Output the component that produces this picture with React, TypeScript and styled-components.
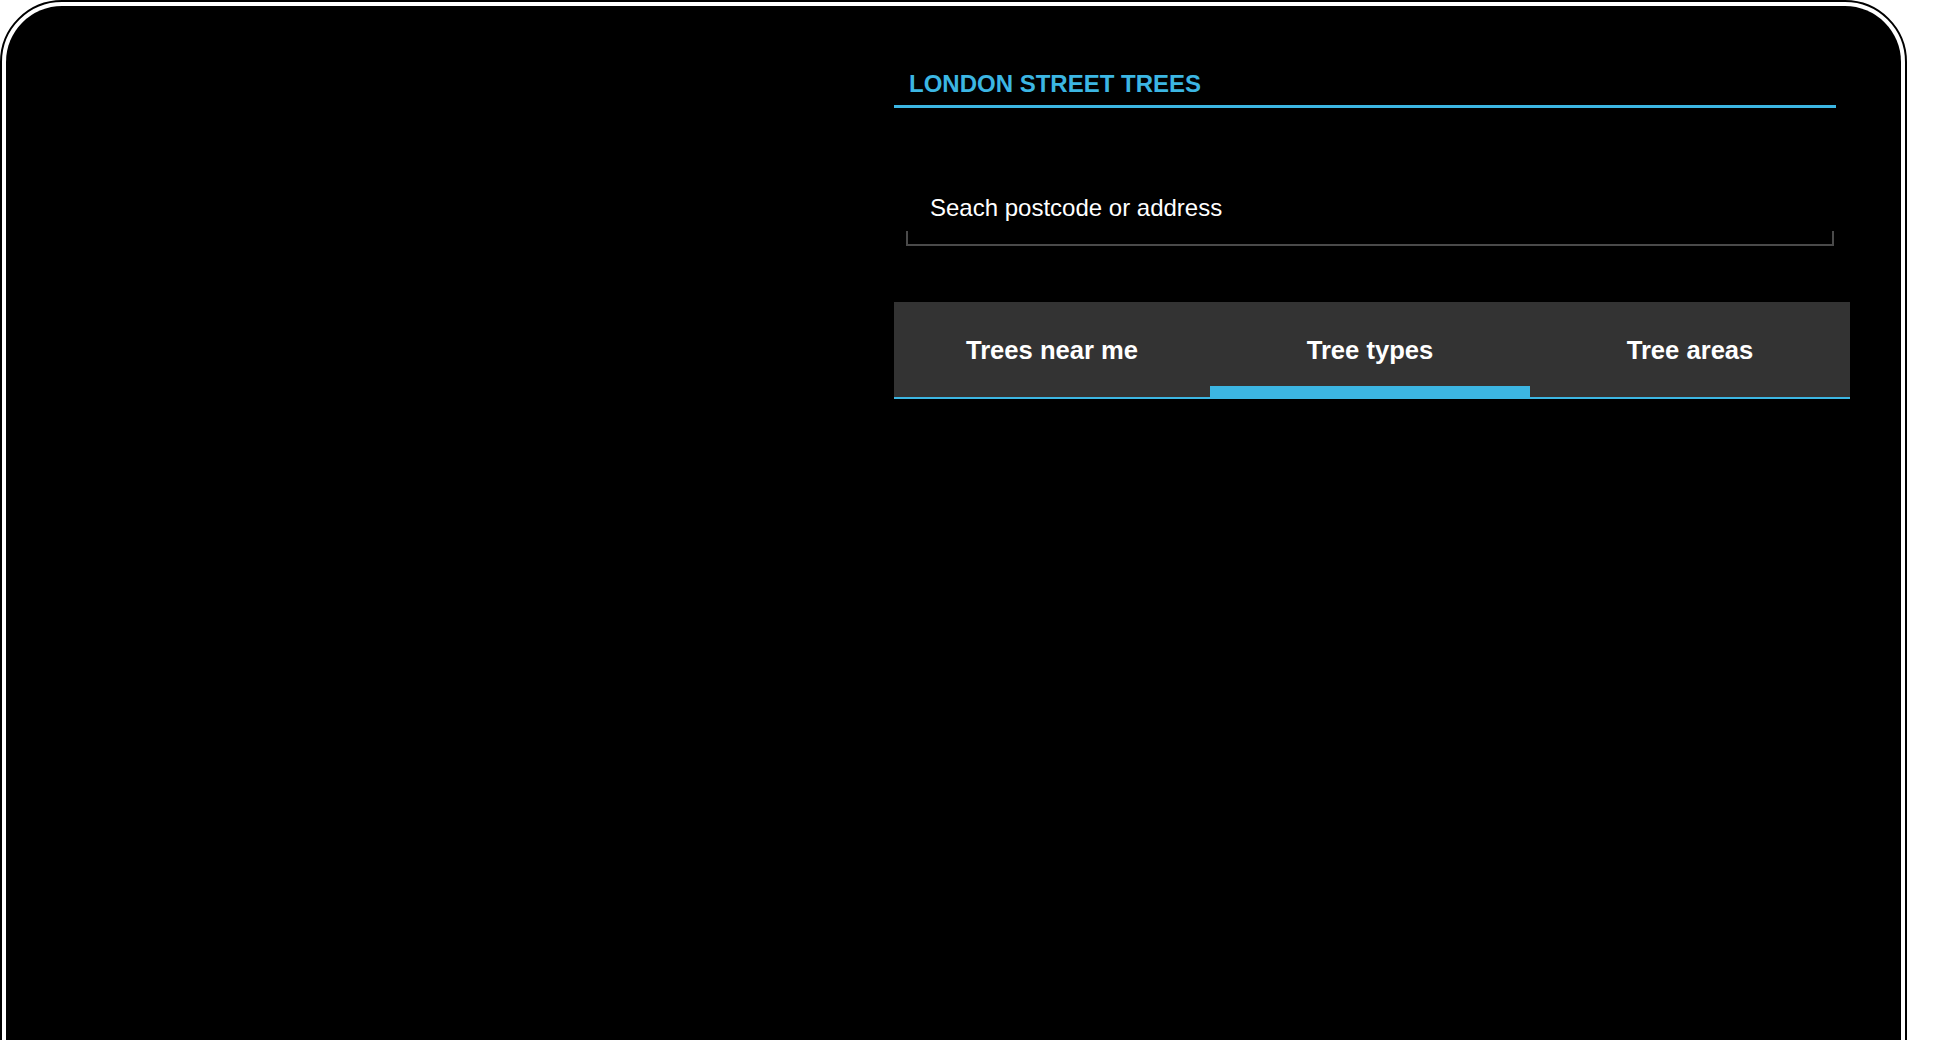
import React, { useState } from "react";
import styled, { createGlobalStyle } from "styled-components";

const GlobalStyle = createGlobalStyle`
  html, body {
    margin: 0;
    padding: 0;
    background: #ffffff;
    overflow: hidden;
  }
  body {
    font-family: "Liberation Sans", Arial, sans-serif;
  }
  * { box-sizing: border-box; }
`;

const BLUE = "#3cb6e3";
const LINE = "#4a4a4a";

const Frame = styled.div`
  width: 1907px;
  height: 1120px;
  border: 2px solid #000;
  border-radius: 62px;
  padding: 4px;
  background: #fff;
`;

const Screen = styled.div`
  height: 100%;
  background: #000;
  border-radius: 56px;
  display: grid;
  grid-template-columns: 1fr 956px;
  padding-right: 51px;
  overflow: hidden;
`;

const MapArea = styled.div``;

const Panel = styled.div`
  display: flex;
  flex-direction: column;
  padding-top: 66px;
`;

const Header = styled.header`
  margin-right: 14px;
  padding: 0 0 9px 15px;
  border-bottom: 3px solid ${BLUE};
`;

const Title = styled.h1`
  margin: 0;
  font-size: 24px;
  line-height: 24px;
  font-weight: 700;
  color: ${BLUE};
  letter-spacing: 0;
`;

const SearchField = styled.div`
  position: relative;
  margin: 63px 16px 0 12px;
  border-bottom: 2px solid ${LINE};

  &::after {
    content: "";
    position: absolute;
    left: 0;
    right: 0;
    bottom: -2px;
    height: 13px;
    border: 2px solid ${LINE};
    border-top: none;
    pointer-events: none;
  }
`;

const SearchInput = styled.input`
  display: block;
  width: 100%;
  height: 73px;
  padding: 25px 24px 24px 24px;
  background: transparent;
  border: none;
  outline: none;
  color: #fff;
  font-family: "Liberation Sans", Arial, sans-serif;
  font-size: 24px;
  line-height: 24px;

  &::placeholder {
    color: #fff;
    opacity: 1;
  }
`;

const TabBar = styled.nav`
  margin-top: 56px;
  display: grid;
  grid-template-columns: 316px 320px 320px;
  height: 97px;
  background: #333333;
  border-bottom: 2px solid ${BLUE};
`;

const Tab = styled.button<{ $active?: boolean }>`
  position: relative;
  display: flex;
  align-items: center;
  justify-content: center;
  padding: 3px 0 0 0;
  border: none;
  background: transparent;
  color: #fff;
  font-family: "Liberation Sans", Arial, sans-serif;
  font-size: 25.6px;
  line-height: 25.6px;
  font-weight: 700;
  cursor: pointer;

  &::after {
    content: "";
    position: absolute;
    left: 0;
    right: 0;
    bottom: 0;
    height: 11px;
    background: ${(p) => (p.$active ? BLUE : "transparent")};
  }
`;

const tabs = ["Trees near me", "Tree types", "Tree areas"];

export default function App() {
  const [active, setActive] = useState(1);
  return (
    <>
      <GlobalStyle />
      <Frame>
        <Screen>
          <MapArea />
          <Panel>
            <Header>
              <Title>LONDON STREET TREES</Title>
            </Header>
            <SearchField>
              <SearchInput placeholder="Seach postcode or address" />
            </SearchField>
            <TabBar>
              {tabs.map((t, i) => (
                <Tab key={t} $active={i === active} onClick={() => setActive(i)}>
                  {t}
                </Tab>
              ))}
            </TabBar>
          </Panel>
        </Screen>
      </Frame>
    </>
  );
}
